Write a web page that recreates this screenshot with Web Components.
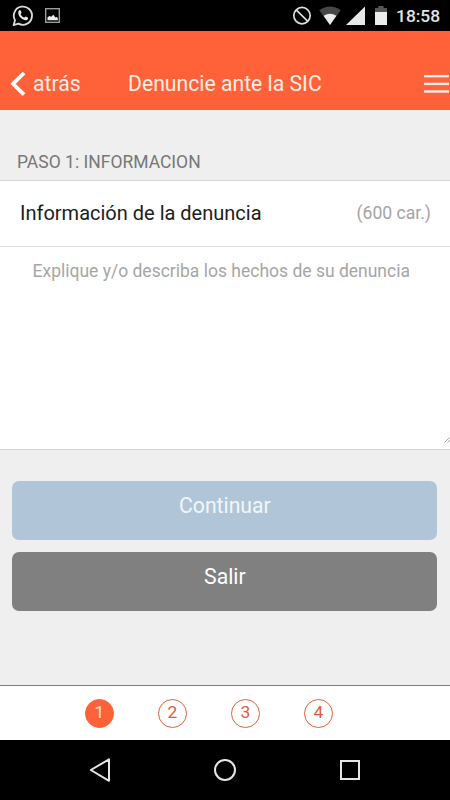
<!DOCTYPE html>
<html lang="es">
<head>
<meta charset="utf-8">
<title>Denuncie ante la SIC</title>
<style>
    html, body {
        margin: 0;
        height: 100%;
        overflow: hidden;
    }

    body {
        font-family: Roboto, "Liberation Sans", sans-serif;
        background: #efefef;
    }
</style>
</head>
<body>
<app-screen>
    <status-bar slot="top" time="18:58"></status-bar>
    <title-bar slot="top" back="atrás">Denuncie ante la SIC</title-bar>

    <section-header>PASO 1: INFORMACION</section-header>
    <field-label hint="(600 car.)">Información de la denuncia</field-label>
    <text-field placeholder="Explique y/o describa los hechos de su denuncia"></text-field>
    <button-group>
        <action-button kind="primary">Continuar</action-button>
        <action-button kind="neutral">Salir</action-button>
    </button-group>

    <step-tabs slot="bottom" steps="4" current="1"></step-tabs>
    <nav-bar slot="bottom"></nav-bar>
</app-screen>

<script>
class BaseElement extends HTMLElement {
    constructor() {
        super();
        this.attachShadow({ mode: 'open' });
    }

    connectedCallback() {
        this.shadowRoot.innerHTML = this.template();
    }
}

class AppScreen extends BaseElement {
    template() {
        return `
            <style>
                :host {
                    display: flex;
                    flex-direction: column;
                    width: 450px;
                    height: 800px;
                    overflow: hidden;
                }

                main {
                    flex: 1;
                    min-height: 0;
                }
            </style>
            <slot name="top"></slot>
            <main><slot></slot></main>
            <slot name="bottom"></slot>
        `;
    }
}

class StatusBar extends BaseElement {
    template() {
        return `
            <style>
                :host {
                    display: flex;
                    justify-content: space-between;
                    flex: none;
                    height: 31px;
                    background: #000;
                    color: #e4e4e4;
                }

                svg {
                    display: block;
                }

                .right {
                    display: flex;
                }

                .time {
                    width: 54px;
                    font-size: 17.4px;
                    font-weight: 500;
                    line-height: 33px;
                    white-space: nowrap;
                }
            </style>
            <svg width="70" height="31" viewBox="0 0 70 31" fill="none" stroke="#dcdcdc">
                <!-- chat -->
                <path d="M13.6 25.2 L15 20.2 A9.1 9.1 0 1 1 18.4 23.6 Z" stroke-width="1.8" stroke-linejoin="round"/>
                <path d="M19.1 10.4 c.7-.6 1.4-.3 1.7.4 l.7 1.8 c.2.6-.9 1.3-.9 1.7 .7 1.6 1.9 2.7 3.5 3.3 .5 0 1.2-1.3 1.7-1.1 l2 1 c.6.4.3 1.7-.5 2.3 -1.6 1.2-4.3.2-6.3-1.7 -2.2-2.1-3.8-5.6-1.9-7.7z" fill="#e8e8e8" stroke="none"/>
                <!-- picture -->
                <rect x="45.7" y="8.7" width="13.6" height="13.6" stroke="#a6a6a6" stroke-width="1.3"/>
                <path d="M47.5 20.3 v-3 l2-1.4 1.6.9 2.3-2 2 2.7 1.2-.6 1.2 1.2 v2.2z" fill="#eee" stroke="none"/>
            </svg>
            <div class="right">
                <svg width="106" height="31" viewBox="290 0 106 31">
                    <!-- no interruptions -->
                    <g fill="none" stroke="#dedede" stroke-width="1.7">
                        <circle cx="302" cy="15.6" r="8.2"/>
                        <path d="M296.2 9.8 L307.8 21.4"/>
                    </g>
                    <!-- wifi -->
                    <path d="M319.3 10.3 Q330 2.8 340.7 10.3 L330 25z" fill="#474747"/>
                    <path d="M323.6 15.8 Q330 11.6 336.4 15.8 L330 25z" fill="#ececec"/>
                    <!-- signal -->
                    <path d="M365 6.5 V25 H346z" fill="#e8e8e8"/>
                    <!-- battery -->
                    <path d="M375 8 h3.2 v-2 h5.4 v2 h3.4 v5 h-12z" fill="#545454"/>
                    <rect x="375" y="12" width="12" height="13" fill="#ececec"/>
                </svg>
                <div class="time">${this.getAttribute('time')}</div>
            </div>
        `;
    }
}

class TitleBar extends BaseElement {
    template() {
        return `
            <style>
                :host {
                    display: grid;
                    grid-template-columns: 128px 1fr 27px;
                    flex: none;
                    box-sizing: border-box;
                    height: 79px;
                    padding-top: 24px;
                    background: #ff6138;
                    color: #ffece4;
                    font-size: 21.2px;
                    line-height: 58px;
                    white-space: nowrap;
                }

                .back {
                    display: flex;
                }

                svg {
                    display: block;
                }
            </style>
            <div class="back">
                <svg width="33" height="55" viewBox="0 55 33 55" fill="none" stroke="#fff" stroke-width="3.8">
                    <path d="M24 73 L13 83.8 L24 94.6"/>
                </svg>
                <span>${this.getAttribute('back')}</span>
            </div>
            <span><slot></slot></span>
            <svg width="27" height="55" viewBox="423 55 27 55" fill="#ffeee7">
                <rect x="424" y="75" width="25" height="2.4"/>
                <rect x="424" y="82.7" width="25" height="2.4"/>
                <rect x="424" y="90.3" width="25" height="2.4"/>
            </svg>
        `;
    }
}

class SectionHeader extends BaseElement {
    template() {
        return `
            <style>
                :host {
                    display: block;
                    box-sizing: border-box;
                    height: 71px;
                    padding: 42px 17px 0;
                    border-bottom: 1px solid #d6d6d6;
                    background: #efefef;
                    color: #777;
                    font-size: 17.5px;
                    line-height: 20px;
                }
            </style>
            <slot></slot>
        `;
    }
}

class FieldLabel extends BaseElement {
    template() {
        return `
            <style>
                :host {
                    display: flex;
                    justify-content: space-between;
                    box-sizing: border-box;
                    height: 66px;
                    padding: 0 19px 0 20px;
                    border-bottom: 1px solid #dcdcdc;
                    background: #fff;
                    color: #1c1c1c;
                    font-size: 20px;
                    line-height: 65px;
                }

                .hint {
                    color: #a4a4a4;
                    font-size: 17.6px;
                    line-height: 64px;
                }
            </style>
            <span><slot></slot></span>
            <span class="hint">${this.getAttribute('hint')}</span>
        `;
    }
}

class TextField extends BaseElement {
    template() {
        return `
            <style>
                :host {
                    display: flex;
                    flex-direction: column;
                    justify-content: space-between;
                    box-sizing: border-box;
                    height: 203px;
                    padding-top: 14px;
                    border-bottom: 1px solid #d2d2d2;
                    background: #fff;
                    color: #a6a6a6;
                    font-size: 17.5px;
                    line-height: 20px;
                    white-space: nowrap;
                }

                .placeholder {
                    padding-left: 32.5px;
                }

                svg {
                    align-self: flex-end;
                    margin-bottom: 6px;
                }
            </style>
            <span class="placeholder">${this.getAttribute('placeholder')}</span>
            <svg width="6" height="6" viewBox="0 0 6 6" stroke="#8c8c8c" stroke-width=".8">
                <path d="M.5 5.5 L5.5 .5 M3.5 5.5 L6 3"/>
            </svg>
        `;
    }
}

class ButtonGroup extends BaseElement {
    template() {
        return `
            <style>
                :host {
                    display: flex;
                    flex-direction: column;
                    gap: 12px;
                    padding: 31px 12.6px 0 12.4px;
                }
            </style>
            <slot></slot>
        `;
    }
}

class ActionButton extends BaseElement {
    template() {
        return `
            <style>
                :host {
                    display: block;
                    box-sizing: border-box;
                    height: 59px;
                    border-radius: 7px;
                    background: #808080;
                    color: #fff;
                    font-size: 21.2px;
                    line-height: 50px;
                    text-align: center;
                }

                :host([kind="primary"]) {
                    background: #b1c5d9;
                    color: #f1f6fa;
                }
            </style>
            <slot></slot>
        `;
    }
}

class StepTabs extends BaseElement {
    template() {
        const count = parseInt(this.getAttribute('steps'), 10);
        const current = parseInt(this.getAttribute('current'), 10);
        let items = '';

        for (let i = 1; i <= count; i++) {
            items += `<div class="step ${i === current ? 'active' : ''}">${i}</div>`;
        }

        return `
            <style>
                :host {
                    display: flex;
                    gap: 44px;
                    flex: none;
                    box-sizing: border-box;
                    height: 55px;
                    padding: 13px 0 0 85px;
                    border-top: 1px solid #e2582f;
                    background: #fff;
                }

                .step {
                    box-sizing: border-box;
                    width: 29px;
                    height: 29px;
                    border: 1px solid #e0603f;
                    border-radius: 50%;
                    color: #d9603f;
                    font-size: 17.4px;
                    line-height: 25px;
                    text-align: center;
                }

                .active {
                    border-color: #ff6138;
                    background: #ff6138;
                    color: #ffe6dc;
                }
            </style>
            ${items}
        `;
    }
}

class NavBar extends BaseElement {
    template() {
        return `
            <style>
                :host {
                    display: flex;
                    justify-content: center;
                    gap: 97px;
                    align-items: center;
                    flex: none;
                    height: 60px;
                    background: #000;
                }
            </style>
            <svg width="28" height="28" viewBox="86 756 28 28" fill="none" stroke="#e6e6e6" stroke-width="2" stroke-linejoin="round">
                <path d="M90.8 770 L109 759.4 V780.8z"/>
            </svg>
            <svg width="28" height="28" viewBox="211 756 28 28" fill="none" stroke="#e6e6e6" stroke-width="2">
                <circle cx="225" cy="770" r="10"/>
            </svg>
            <svg width="28" height="28" viewBox="336 756 28 28" fill="none" stroke="#e6e6e6" stroke-width="2">
                <rect x="341" y="761" width="18" height="18"/>
            </svg>
        `;
    }
}

customElements.define('app-screen', AppScreen);
customElements.define('status-bar', StatusBar);
customElements.define('title-bar', TitleBar);
customElements.define('section-header', SectionHeader);
customElements.define('field-label', FieldLabel);
customElements.define('text-field', TextField);
customElements.define('button-group', ButtonGroup);
customElements.define('action-button', ActionButton);
customElements.define('step-tabs', StepTabs);
customElements.define('nav-bar', NavBar);
</script>
</body>
</html>
